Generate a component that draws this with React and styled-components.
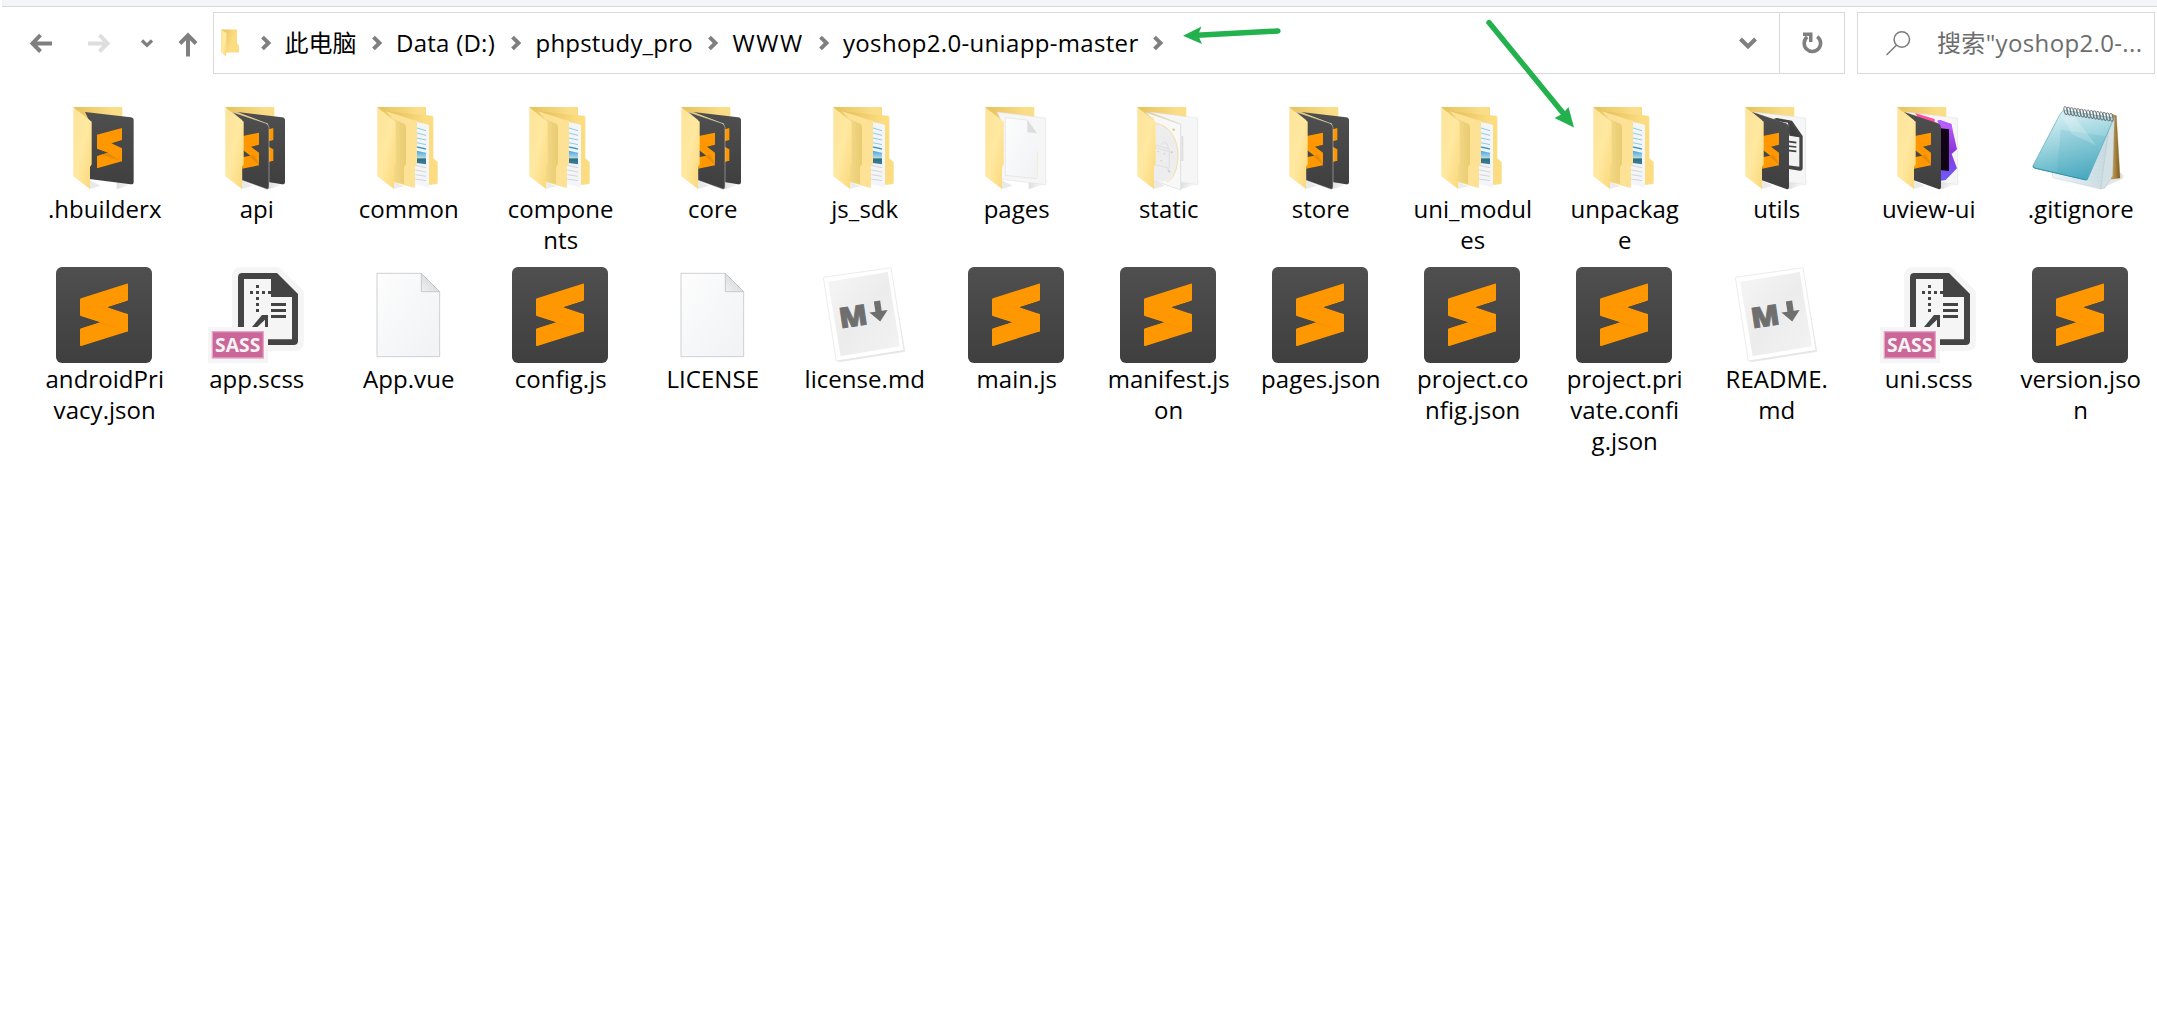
import React from "react";
import styled, { createGlobalStyle } from "styled-components";

const GlobalStyle = createGlobalStyle`
  * { box-sizing: border-box; }
  html, body { margin: 0; background: #fff; }
  body {
    font-family: "Open Sans", "Noto Sans CJK SC", sans-serif;
    font-size: 24px;
    color: #000;
  }
`;

const Window = styled.div`
  position: relative;
  width: 2157px;
  height: 1026px;
  overflow: hidden;
  background: #fff;
`;

const TitleEdge = styled.div`
  height: 7px;
  margin-left: 2px;
  background: #f4f5f7;
  border-bottom: 1px solid #d9d9d9;
`;

const Toolbar = styled.header`
  display: flex;
  align-items: center;
  height: 62px;
  margin: 5px 2px 0 0;
`;

const NavButtons = styled.nav`
  display: flex;
  align-items: center;
  width: 213px;
  height: 62px;
`;

const AddressBar = styled.div`
  display: flex;
  align-items: center;
  width: 1632px;
  height: 62px;
  padding-left: 7px;
  border: 1px solid #d9d9d9;
`;

const Crumbs = styled.div`
  display: flex;
  align-items: center;
  flex: 1;
  padding-left: 21.5px;
`;

const Crumb = styled.span`
  width: ${(p) => p.$w}px;
  padding-left: ${(p) => p.$pad || 0}px;
  line-height: 34px;
  white-space: nowrap;
  letter-spacing: ${(p) => p.$ls || 0}px;
`;

const DropButton = styled.div`
  display: flex;
  justify-content: center;
  width: 62px;
`;

const RefreshButton = styled.div`
  display: flex;
  align-items: center;
  justify-content: center;
  width: 65px;
  height: 60px;
  border-left: 1px solid #d9d9d9;
`;

const SearchBox = styled.div`
  display: flex;
  align-items: center;
  width: 298px;
  height: 62px;
  margin-left: 12px;
  padding-left: 26px;
  border: 1px solid #d9d9d9;
`;

const SearchText = styled.span`
  margin-left: 25px;
  color: #6d6d6d;
  line-height: 34px;
  white-space: nowrap;
  letter-spacing: 0.35px;
`;

const Glyph = styled.svg`
  display: block;
  flex: none;
  width: ${(p) => p.$w}px;
  height: ${(p) => p.$h}px;
  margin-left: ${(p) => p.$ml || 0}px;
  overflow: visible;
`;

const FileGrid = styled.main`
  display: grid;
  grid-template-columns: repeat(14, 152px);
  grid-auto-rows: 170px;
  padding: 23px 0 0 28px;
`;

const FileItem = styled.div`
  display: flex;
  flex-direction: column;
  align-items: center;
`;

const Picture = styled.svg`
  display: block;
  width: 96px;
  height: 96px;
  overflow: visible;
`;

const Label = styled.div`
  padding-left: 1.5px;
  text-align: center;
  line-height: 31px;
  letter-spacing: 0.05px;
`;

const LabelLine = styled.span`
  display: block;
  white-space: nowrap;
`;

const Annotations = styled.svg`
  position: absolute;
  left: 0;
  top: 0;
  width: 2157px;
  height: 140px;
  pointer-events: none;
`;

const DefsSheet = styled.svg`
  position: absolute;
  width: 0;
  height: 0;
`;

/* ---------- shared gradients ---------- */

const Defs = () => (
  <DefsSheet>
    <defs>
      <linearGradient id="flap" x1="0" y1="0" x2="1" y2="1">
        <stop offset="0" stopColor="#fbe39a" />
        <stop offset="0.5" stopColor="#ffe8a0" />
        <stop offset="1" stopColor="#fbd87a" />
      </linearGradient>
      <linearGradient id="back" x1="0" y1="0" x2="1" y2="0">
        <stop offset="0" stopColor="#e6c15c" />
        <stop offset="0.8" stopColor="#fbdd87" />
      </linearGradient>
      <linearGradient id="innerBack" x1="0" y1="0" x2="1" y2="0.4">
        <stop offset="0" stopColor="#e3bd58" />
        <stop offset="0.7" stopColor="#fbdc80" />
      </linearGradient>
      <linearGradient id="innerShade" x1="0" y1="0" x2="1" y2="0">
        <stop offset="0" stopColor="#f3d987" />
        <stop offset="1" stopColor="#e9cb70" />
      </linearGradient>
      <linearGradient id="dark" x1="0" y1="0" x2="0" y2="1">
        <stop offset="0" stopColor="#4f4f4f" />
        <stop offset="1" stopColor="#3f3f3f" />
      </linearGradient>
      <linearGradient id="page" x1="0" y1="0" x2="1" y2="1">
        <stop offset="0" stopColor="#fdfdfd" />
        <stop offset="1" stopColor="#f0f2f5" />
      </linearGradient>
      <linearGradient id="corner" x1="0" y1="1" x2="0.7" y2="0.3">
        <stop offset="0" stopColor="#f0f0f1" />
        <stop offset="1" stopColor="#d8d9db" />
      </linearGradient>
      <linearGradient id="fold" gradientUnits="userSpaceOnUse" x1="165" y1="200" x2="178" y2="172">
        <stop offset="0" stopColor="#ff9800" />
        <stop offset="1" stopColor="#e88600" />
      </linearGradient>
      <linearGradient id="photo" x1="0" y1="0" x2="0" y2="1">
        <stop offset="0" stopColor="#4ba3d8" />
        <stop offset="0.5" stopColor="#a9d8ee" />
        <stop offset="0.62" stopColor="#3d6d70" />
        <stop offset="1" stopColor="#2f7fb4" />
      </linearGradient>
      <linearGradient id="purple" x1="0" y1="0" x2="0" y2="1">
        <stop offset="0" stopColor="#c060ff" />
        <stop offset="0.5" stopColor="#8c38d8" />
        <stop offset="1" stopColor="#6a5cff" />
      </linearGradient>
      <linearGradient id="cover" x1="0.2" y1="0" x2="0.5" y2="1">
        <stop offset="0" stopColor="#e2f4f7" />
        <stop offset="0.45" stopColor="#a0d6e0" />
        <stop offset="1" stopColor="#4fadc2" />
      </linearGradient>
      <linearGradient id="sheets" x1="0" y1="0" x2="1" y2="0">
        <stop offset="0" stopColor="#eef5f7" />
        <stop offset="1" stopColor="#c3d6dc" />
      </linearGradient>
      <linearGradient id="board" x1="0" y1="0" x2="1" y2="0">
        <stop offset="0" stopColor="#c9a55a" />
        <stop offset="1" stopColor="#7d5c20" />
      </linearGradient>
      <linearGradient id="mdPage" x1="0" y1="0" x2="1" y2="1">
        <stop offset="0" stopColor="#f6f6f6" />
        <stop offset="0.5" stopColor="#ececec" />
        <stop offset="1" stopColor="#f3f3f3" />
      </linearGradient>
      <linearGradient id="castShadow" x1="0" y1="0" x2="1" y2="0">
        <stop offset="0" stopColor="#cfcfcf" />
        <stop offset="1" stopColor="#ffffff" stopOpacity="0" />
      </linearGradient>
    </defs>
  </DefsSheet>
);

/* ---------- folders, drawn on a 288 unit square ---------- */

const Flap = () => (
  <path d="M52 31 L107 74 V202 L102 210 V276 L52 238 Z" fill="url(#flap)" />
);

const FolderBack = () => (
  <path d="M52 30 H199 V70 L107 100 Z" fill="url(#back)" />
);

const CastShadow = () => (
  <>
    <path d="M102 276 L134 266 L102 250 Z" fill="#e9e9ea" />
    <path d="M182 277 L258 252 L232 247 L182 255 Z" fill="url(#castShadow)" opacity="0.7" />
  </>
);

const FrontPanel = ({ edge }) => (
  <>
    <path
      d="M72 45 L174 79 Q183 83 183 91 V270 Q183 279 175 276 L102 250 V70 Z"
      fill="url(#dark)"
      stroke={edge ? "#d9d9d9" : "none"}
      strokeWidth="1.4"
    />
    <path
      d="M104 117 L153 107 V143 L129 149 L153 167 V205 L102 215 V181 L127 176 L104 158 Z"
      fill="#ff9800"
    />
    <path d="M124 177 L136 173 L153 197 V205 Z" fill="#e88a08" />
  </>
);

const CodeFolder = () => (
  <>
    <CastShadow />
    <FolderBack />
    <path d="M87 45 L224 61 Q233 62 233 70 V254 Q233 263 224 262 L100 246 V72 Z" fill="url(#dark)" />
    <path d="M123 113 L198 93 V129 L166 139 L198 154 V193 L123 214 V177 L156 167 L123 155 Z" fill="#ff9800" />
    <path d="M156 167 L197 193 L135 173 Z" fill="#ea8b08" />
    <Flap />
  </>
);

const CodesFolder = () => (
  <>
    <CastShadow />
    <FolderBack />
    <path d="M88 45 L222 61 Q231 62 231 70 V254 Q231 263 222 262 L180 255 V80 Z" fill="url(#dark)" />
    <path d="M182 97 L196 93 V129 L182 133 Z M182 149 L196 157 V191 L182 195 Z" fill="#ff9800" />
    <FrontPanel edge />
    <Flap />
  </>
);

const NestedFolder = () => (
  <>
    <path d="M102 276 L134 268 L102 256 Z" fill="#ececed" />
    <path d="M52 30 H198 V66 L107 90 Z" fill="url(#back)" />
    <path d="M78 43 L216 56 Q220 57 220 62 V183 L233 196 V257 Q233 262 226 262 L204 264 L170 72 Z" fill="url(#innerBack)" />
    <path d="M169 74 L207 83 V272 L163 260 Z" fill="#f3f5f7" />
    <g stroke="#57b3dc" strokeWidth="2" fill="none">
      <path d="M171 93 L198 101 M171 108 L198 115 M171 123 L198 129 M171 137 L198 143" />
      <path d="M171 150 L198 156" strokeWidth="4" stroke="#3a9dd0" />
    </g>
    <path d="M170 161 L198 167 V202 L170 198 Z" fill="url(#photo)" />
    <g stroke="#bfc3c8" strokeWidth="2">
      <path d="M166 205 L198 212 M166 219 L198 225 M166 233 L198 238 M166 246 L198 251" />
    </g>
    <path d="M78 43 L167 71 Q171 72 171 77 V200 L165 208 V268 Q165 273 160 272 L102 256 V70 Z" fill="#fde295" />
    <path d="M102 66 L130 79 Q138 83 138 91 V200 L132 210 V262 L102 254 Z" fill="url(#innerShade)" />
    <Flap />
  </>
);

const PagesFolder = () => (
  <>
    <CastShadow />
    <FolderBack />
    <path d="M87 45 L233 63 V263 L100 247 V72 Z" fill="#f6f6f7" stroke="#dcdcdc" strokeWidth="1.5" />
    <path d="M112 62 L178 69 L206 109 V245 L112 235 Z" fill="url(#page)" />
    <path d="M206 245 L112 235 V62 L178 69 L206 109" fill="none" stroke="#dcd8cb" strokeWidth="1.5" />
    <path d="M178 69 L206 109 L178 106 Z" fill="#dcdddf" />
    <path d="M208 162 V244" stroke="#f0dfae" strokeWidth="1.5" />
    <Flap />
  </>
);

const StaticFolder = () => (
  <>
    <CastShadow />
    <FolderBack />
    <path d="M89 45 L233 63 V263 L180 255 V80 Z" fill="#f6f6f7" stroke="#dcdcdc" strokeWidth="1.5" />
    <path d="M184 116 L190 118 V192 H184 Z" fill="#dedede" />
    <path d="M75 45 L182 82 V279 L102 251 V70 Z" fill="#f8f8f9" stroke="#cfcfcf" strokeWidth="1.5" />
    <path d="M106 79 C150 84 174 130 174 175 C173 230 150 262 104 251 Z" fill="#ededee" />
    <path d="M106 79 C150 84 174 130 174 175 C173 222 158 248 140 254" fill="none" stroke="#efd893" strokeWidth="2.5" />
    <path d="M106 144 L148 156 V214 L106 203 M106 152 L148 164 M122 144 Q133 128 144 144 V155" fill="none" stroke="#d3d3d3" strokeWidth="1.8" />
    <g fill="#c8c8c8">
      <circle cx="114" cy="164" r="2" />
      <circle cx="133" cy="170" r="2" />
      <circle cx="124" cy="191" r="2" />
      <circle cx="155" cy="166" r="3" />
      <path d="M142 216 L151 222 L148 228 Z" />
    </g>
    <circle cx="161" cy="98" r="3.5" fill="#d9c46b" />
    <circle cx="98" cy="63" r="3" fill="#f3e3aa" />
    <Flap />
  </>
);

const UtilsFolder = () => (
  <>
    <CastShadow />
    <FolderBack />
    <path d="M76 45 L233 63 V263 L180 255 V80 Z" fill="#f6f6f7" stroke="#dcdcdc" strokeWidth="1.5" />
    <path d="M136 66 L146 63 L192 71 L224 117 V214 Q224 223 215 221 L178 215 V84 Z" fill="#444" />
    <path d="M150 73 L180 77 L184 116 L214 121 V209 L180 205 V92 Z" fill="#f2f2f2" />
    <path d="M187 78 L214 120 L187 114 Z" fill="#3f3f3f" />
    <path d="M178 133 L205 137 M178 147 L205 150 M178 160 L205 163" stroke="#3f3f3f" strokeWidth="5" />
    <FrontPanel />
    <Flap />
  </>
);

const ViewFolder = () => (
  <>
    <CastShadow />
    <FolderBack />
    <path d="M76 45 L233 63 V263 L180 255 V80 Z" fill="#f6f6f7" stroke="#dcdcdc" strokeWidth="1.5" />
    <path d="M105 48 L164 66 V80 L118 66 Z" fill="#ff4fa0" />
    <path d="M172 71 L180 69 L214 81 L231 157 L215 171 L231 214 L197 249 L180 252 V80 Z" fill="url(#purple)" />
    <path d="M172 71 L180 69 L214 81 L217 95 L180 92 Z" fill="#b85cff" />
    <path d="M180 94 L207 97 V222 L180 219 Z" fill="#100414" />
    <FrontPanel />
    <Flap />
  </>
);

/* ---------- files ---------- */

const CodeFile = () => (
  <>
    <rect x="0" y="0" width="288" height="288" rx="18" fill="url(#dark)" />
    <path d="M75 184 L215 138 V190 Q215 193 212 194 L76 237 Q72 238 72 234 V188 Q72 185 75 184 Z" fill="#ff9800" />
    <path d="M129 167 L216 194 V170 L160 150 Z" fill="url(#fold)" />
    <path d="M75 94 L212 50 Q216 49 216 53 V98 Q216 101 213 102 L155 121 L213 140 Q216 141 216 144 V190 Q216 194 212 193 L75 148 Q72 147 72 144 V98 Q72 95 75 94 Z" fill="#ff9800" />
    <path d="M155 121 L216 101 V141 Z" fill="#484848" />
    <path d="M72 184 V147 L132 166 Z" fill="#464646" />
  </>
);

const SassFile = () => (
  <>
    <path d="M100 0 H205 Q213 0 218 5 L281 66 Q288 72 288 80 V224 Q288 252 260 252 H180 V288 H0 V180 H72 V28 Q72 0 100 0 Z" fill="#f5f5f5" />
    <path d="M103 18 H207 L270 81 V221 Q270 234 257 234 H180 V217 H252 V90 H189 V36 H108 V180 H90 V31 Q90 18 103 18 Z" fill="#444" />
    <path d="M207 36 V74 H244 Z" fill="#444" />
    <g fill="#444">
      <rect x="144" y="54" width="9" height="9" />
      <rect x="126" y="72" width="9" height="9" />
      <rect x="144" y="72" width="9" height="9" />
      <rect x="162" y="72" width="9" height="9" />
      <rect x="180" y="72" width="9" height="9" />
      <rect x="144" y="90" width="9" height="9" />
      <rect x="144" y="108" width="9" height="9" />
      <rect x="144" y="126" width="9" height="9" />
      <rect x="189" y="108" width="45" height="9" />
      <rect x="189" y="126" width="45" height="9" />
      <rect x="189" y="144" width="45" height="9" />
      <path d="M132 180 L162 144 H180 V180 H171 V158 L148 180 Z" />
    </g>
    <rect x="13" y="194" width="153" height="79" fill="#cb6699" stroke="#e6a5c5" strokeWidth="4" />
    <text x="89" y="256" textAnchor="middle" textLength="136" lengthAdjust="spacingAndGlyphs" fontFamily="Open Sans, sans-serif" fontWeight="700" fontSize="57" fill="#f3f3f3">
      SASS
    </text>
  </>
);

const BlankFile = () => (
  <>
    <path d="M51 19 H184 L239 74 V269 H51 Z" fill="url(#page)" stroke="#c5c7c9" strokeWidth="2.5" />
    <path d="M184 19 V74 H239 Z" fill="url(#corner)" stroke="#bfc1c3" strokeWidth="2.5" />
  </>
);

const MarkdownFile = () => (
  <>
    <path d="M24 35 L224 5 L268 254 L68 286 Z" fill="#d5d5d5" opacity="0.55" />
    <path d="M22 31 L225 2 L264 250 L61 282 Z" fill="#fff" stroke="#e3e3e3" strokeWidth="2" />
    <path d="M36 44 L215 15 L252 238 L74 268 Z" fill="url(#mdPage)" />
    <g transform="translate(146 142) rotate(-8.5)" fill="#6f6f6f">
      <text x="-77" y="31" textLength="84" lengthAdjust="spacingAndGlyphs" fontFamily="Open Sans, sans-serif" fontWeight="800" fontSize="84" stroke="#6f6f6f" strokeWidth="3">
        M
      </text>
      <path d="M33 -34 H52 V-3 H70 L43 28 L15 -3 H33 Z" />
    </g>
  </>
);

const NotepadFile = () => {
  const rings = Array.from({ length: 15 }, (_, i) => i);
  const rules = Array.from({ length: 15 }, (_, i) => i);
  return (
    <>
      <path d="M205 275 L272 245 Q280 236 266 228 L240 224 Z" fill="#d6d6d6" opacity="0.6" />
      <path d="M240 52 L253 56 L264 243 L238 246 Z" fill="url(#board)" stroke="#7c5d22" strokeWidth="1" />
      <path d="M61 226 L62 242 L206 276 L220 271 L243 70 L247 62 L110 45 Z" fill="url(#sheets)" stroke="#b4c5cb" strokeWidth="1" />
      <path d="M233 75 L206 276 L219 272 L242 236 L247 62 Z" fill="#d3e0e4" stroke="#a9babf" strokeWidth="1" />
      <g stroke="#b9dce6" strokeWidth="1.5">
        {rules.map((i) => (
          <path key={i} d={`M${150 - i * 2} ${88 + i * 11} L${228 - i * 1.5} ${99 + i * 11}`} />
        ))}
      </g>
      <path d="M94 40 L246 63 L168 244 Q165 250 158 248 L7 213 Q1 211 3 206 L84 52 Z" fill="url(#cover)" stroke="#55a7b8" strokeWidth="2" />
      <path d="M86 98 L222 118 L164 245 L75 226 Z" fill="#3c9db4" opacity="0.14" />
      <path d="M92 60 L130 62 L192 145 L120 112 Z" fill="#fff" opacity="0.2" />
      <path d="M4 207 L7 213 L158 248 Q165 250 168 244" fill="none" stroke="#2f93aa" strokeWidth="3" />
      <g fill="none" strokeWidth="3">
        {rings.map((i) => (
          <g key={i} transform={`translate(${101 + i * 9.8} ${41 + i * 1.45}) rotate(-12)`}>
            <ellipse rx="4.5" ry="12" stroke="#6c7376" />
            <path d="M-3 -9 Q0 -13 3 -8" stroke="#dfe4e6" strokeWidth="1.5" />
          </g>
        ))}
      </g>
    </>
  );
};

const PICTURES = {
  code: CodeFolder,
  codes: CodesFolder,
  nested: NestedFolder,
  pages: PagesFolder,
  static: StaticFolder,
  utils: UtilsFolder,
  view: ViewFolder,
  notepad: NotepadFile,
  js: CodeFile,
  sass: SassFile,
  blank: BlankFile,
  md: MarkdownFile,
};

const FILES = [
  ["code", ".hbuilderx"],
  ["codes", "api"],
  ["nested", "common"],
  ["nested", "compone", "nts"],
  ["codes", "core"],
  ["nested", "js_sdk"],
  ["pages", "pages"],
  ["static", "static"],
  ["codes", "store"],
  ["nested", "uni_modul", "es"],
  ["nested", "unpackag", "e"],
  ["utils", "utils"],
  ["view", "uview-ui"],
  ["notepad", ".gitignore"],
  ["js", "androidPri", "vacy.json"],
  ["sass", "app.scss"],
  ["blank", "App.vue"],
  ["js", "config.js"],
  ["blank", "LICENSE"],
  ["md", "license.md"],
  ["js", "main.js"],
  ["js", "manifest.js", "on"],
  ["js", "pages.json"],
  ["js", "project.co", "nfig.json"],
  ["js", "project.pri", "vate.confi", "g.json"],
  ["md", "README.", "md"],
  ["sass", "uni.scss"],
  ["js", "version.jso", "n"],
];

const Chevron = () => (
  <Glyph $w={10} $h={14} viewBox="0 0 10 14">
    <path d="M1.5 1.2 L7.5 7 L1.5 12.8" fill="none" stroke="#7f7f7f" strokeWidth="3.9" />
  </Glyph>
);

const CRUMBS = [
  { text: "此电脑", w: 101, pad: 14 },
  { text: "Data (D:)", w: 129, pad: 14.5, ls: 0.25 },
  { text: "phpstudy_pro", w: 187, pad: 15, ls: 0.2 },
  { text: "WWW", w: 101, pad: 15, ls: 1.6 },
  { text: "yoshop2.0-uniapp-master", w: 324, pad: 14.5, ls: 0.33 },
];

export default function App() {
  return (
    <Window>
      <GlobalStyle />
      <Defs />
      <TitleEdge />
      <Toolbar>
        <NavButtons>
          <Glyph $w={22} $h={18} $ml={30} viewBox="0 0 22 18">
            <path d="M22 9.5 H3 M10.5 1 L2.5 9.5 L10.5 17.5" fill="none" stroke="#7f7f7f" strokeWidth="4" />
          </Glyph>
          <Glyph $w={22} $h={18} $ml={36} viewBox="0 0 22 18">
            <path d="M0 9.5 H19 M11.5 1 L19.5 9.5 L11.5 17.5" fill="none" stroke="#dedede" strokeWidth="4" />
          </Glyph>
          <Glyph $w={12} $h={8} $ml={31} viewBox="0 0 12 8">
            <path d="M1 1.5 L6 6.3 L11 1.5" fill="none" stroke="#7f7f7f" strokeWidth="3.2" />
          </Glyph>
          <Glyph $w={18} $h={22} $ml={26} viewBox="0 0 18 22">
            <path d="M9 24.5 V4 M1 11.5 L9 3.3 L17 11.5" fill="none" stroke="#7f7f7f" strokeWidth="4" />
          </Glyph>
        </NavButtons>
        <AddressBar>
          <Glyph $w={18} $h={28} viewBox="0 0 18 28">
            <path d="M0 0.5 H16 V14 L18 17 V23.5 H5 Z" fill="url(#innerBack)" />
            <path d="M0 0.5 L5.5 4 V20 L5 27.5 L0 23.5 Z" fill="url(#flap)" />
          </Glyph>
          <Crumbs>
            <Chevron />
            {CRUMBS.map((c) => (
              <React.Fragment key={c.text}>
                <Crumb $w={c.w} $pad={c.pad} $ls={c.ls}>
                  {c.text}
                </Crumb>
                <Chevron />
              </React.Fragment>
            ))}
          </Crumbs>
          <DropButton>
            <Glyph $w={18} $h={12} viewBox="0 0 18 12">
              <path d="M1.5 2 L9 9.5 L16.5 2" fill="none" stroke="#7f7f7f" strokeWidth="4" />
            </Glyph>
          </DropButton>
          <RefreshButton>
            <Glyph $w={20} $h={22} viewBox="0 0 20 22">
              <path d="M15.2 4.6 A8.2 8.2 0 1 1 5.2 4.9" fill="none" stroke="#7f7f7f" strokeWidth="3.6" />
              <path d="M1 0.5 H10.5 V10 H7 V4 H1 Z" fill="#7f7f7f" />
            </Glyph>
          </RefreshButton>
        </AddressBar>
        <SearchBox>
          <Glyph $w={26} $h={24} $ml={2} viewBox="0 0 26 24">
            <g fill="none" stroke="#7a7a7a" strokeWidth="1.5">
              <circle cx="15.8" cy="8.5" r="7.7" />
              <path d="M10.4 14.2 L0.5 24" />
            </g>
          </Glyph>
          <SearchText>搜索"yoshop2.0-...</SearchText>
        </SearchBox>
      </Toolbar>
      <FileGrid>
        {FILES.map(([kind, ...lines]) => {
          const Drawing = PICTURES[kind];
          return (
            <FileItem key={lines.join("")}>
              <Picture viewBox="0 0 288 288">
                <Drawing />
              </Picture>
              <Label>
                {lines.map((line) => (
                  <LabelLine key={line}>{line}</LabelLine>
                ))}
              </Label>
            </FileItem>
          );
        })}
      </FileGrid>
      <Annotations viewBox="0 0 2157 140">
        <g fill="#22b14c" stroke="#22b14c">
          <path d="M1278 31 L1197 35.3" strokeWidth="5.4" strokeLinecap="round" />
          <path d="M1183 35.8 L1201.5 26.5 L1198 35 L1202 44 Z" stroke="none" />
          <path d="M1489 22.5 L1563 113" strokeWidth="5.4" strokeLinecap="round" />
          <path d="M1574 127.5 L1568.5 107 L1563 113.5 L1554.5 118 Z" stroke="none" />
        </g>
      </Annotations>
    </Window>
  );
}
